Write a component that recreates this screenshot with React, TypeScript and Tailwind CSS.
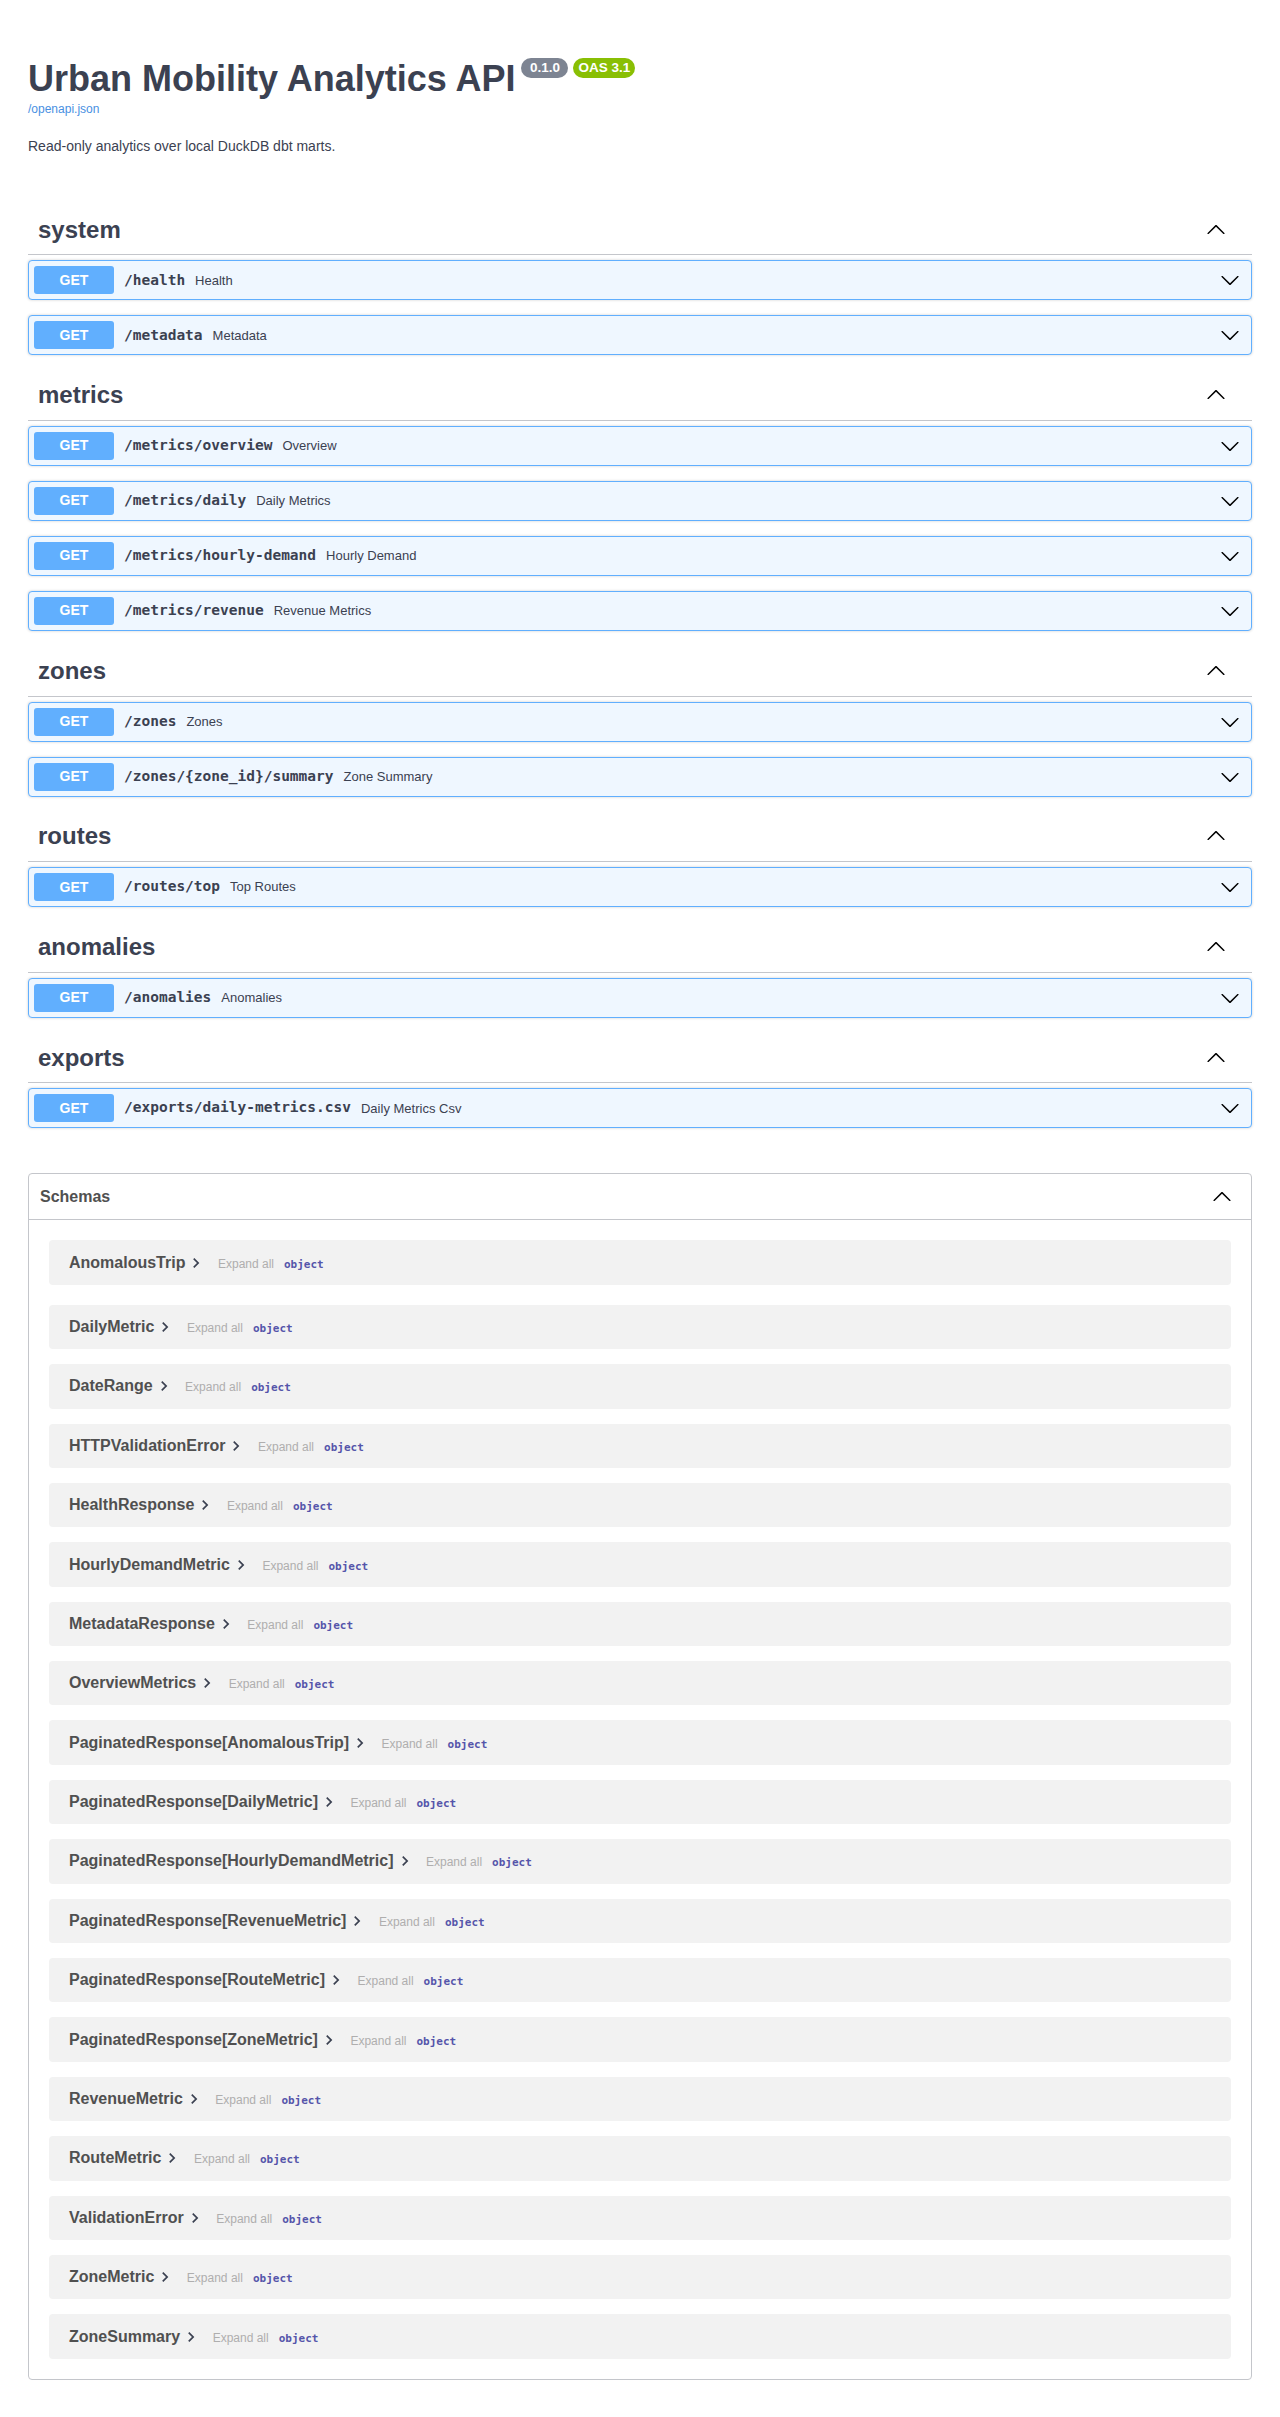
import React from "react";

interface Op {
  path: string;
  summary: string;
}

interface Tag {
  name: string;
  ops: Op[];
}

const tags: Tag[] = [
  { name: "system", ops: [{ path: "/health", summary: "Health" }, { path: "/metadata", summary: "Metadata" }] },
  {
    name: "metrics",
    ops: [
      { path: "/metrics/overview", summary: "Overview" },
      { path: "/metrics/daily", summary: "Daily Metrics" },
      { path: "/metrics/hourly-demand", summary: "Hourly Demand" },
      { path: "/metrics/revenue", summary: "Revenue Metrics" },
    ],
  },
  {
    name: "zones",
    ops: [
      { path: "/zones", summary: "Zones" },
      { path: "/zones/{zone_id}/summary", summary: "Zone Summary" },
    ],
  },
  { name: "routes", ops: [{ path: "/routes/top", summary: "Top Routes" }] },
  { name: "anomalies", ops: [{ path: "/anomalies", summary: "Anomalies" }] },
  { name: "exports", ops: [{ path: "/exports/daily-metrics.csv", summary: "Daily Metrics Csv" }] },
];

const schemas = [
  "AnomalousTrip",
  "DailyMetric",
  "DateRange",
  "HTTPValidationError",
  "HealthResponse",
  "HourlyDemandMetric",
  "MetadataResponse",
  "OverviewMetrics",
  "PaginatedResponse[AnomalousTrip]",
  "PaginatedResponse[DailyMetric]",
  "PaginatedResponse[HourlyDemandMetric]",
  "PaginatedResponse[RevenueMetric]",
  "PaginatedResponse[RouteMetric]",
  "PaginatedResponse[ZoneMetric]",
  "RevenueMetric",
  "RouteMetric",
  "ValidationError",
  "ZoneMetric",
  "ZoneSummary",
];

const ARROW_DOWN =
  "M17.418 6.109c.272-.268.709-.268.979 0s.271.701 0 .969l-7.908 7.83c-.27.268-.707.268-.979 0l-7.908-7.83c-.27-.268-.27-.701 0-.969.271-.268.709-.268.979 0L10 13.25l7.418-7.141z";

const ArrowDown = ({ up = false }: { up?: boolean }) => (
  <svg width="20" height="20" viewBox="0 0 20 20" className={up ? "rotate-180 shrink-0" : "shrink-0"}>
    <path d={ARROW_DOWN} fill="#000" />
  </svg>
);

const ModelToggle = () => (
  <svg width="20" height="20" viewBox="0 0 24 24" className="shrink-0">
    <path d="M10 6L8.59 7.41 13.17 12l-4.58 4.59L10 18l6-6z" fill="#3b4151" />
  </svg>
);

const mono = "font-['DejaVu_Sans_Mono',monospace]";

const App: React.FC = () => {
  return (
    <div className="min-h-screen bg-white px-[28px] pt-[58px] pb-[38px] font-['Liberation_Sans',Arial,sans-serif] text-[#3b4151]">
      {/* Info */}
      <div className="flex items-start">
        <h2 className="text-[36px] font-bold leading-[41.4px]">Urban Mobility Analytics API</h2>
        <span className="ml-[6px] flex h-[20px] w-[47px] items-center justify-center rounded-full bg-[#7d8492] text-[13.5px] font-bold text-white">
          0.1.0
        </span>
        <span className="ml-[5px] flex h-[20px] w-[62px] items-center justify-center rounded-full bg-[#89bf04] text-[13.5px] font-bold text-white">
          OAS 3.1
        </span>
      </div>
      <a className="mt-[4px] block text-[12px] leading-[13.8px] text-[#4990e2]">/openapi.json</a>
      <p className="mt-[20.6px] text-[14px] leading-[16px]">Read-only analytics over local DuckDB dbt marts.</p>

      {/* Tags */}
      <div className="mt-[51px]">
        {tags.map((tag) => (
          <div key={tag.name} className="flex flex-col">
            <div className="mb-[5px] flex h-[50.6px] items-center border-b border-[#c4c6cb] pl-[10px] pr-[26px]">
              <h3 className="text-[24px] font-bold">{tag.name}</h3>
              <div className="ml-auto">
                <ArrowDown up />
              </div>
            </div>
            {tag.ops.map((op) => (
              <div
                key={op.path}
                className="mb-[15px] flex h-[40px] items-center rounded-[4px] border border-[#61affe] bg-[#eff7ff] px-[5px] shadow-[0_0_3px_rgba(0,0,0,0.19)]"
              >
                <span className="flex h-[28px] w-[80px] items-center justify-center rounded-[3px] bg-[#61affe] text-[14px] font-bold text-white">
                  GET
                </span>
                <span className={`ml-[10px] text-[14.5px] font-bold ${mono}`}>{op.path}</span>
                <span className="ml-[10px] text-[13px]">{op.summary}</span>
                <div className="ml-auto mr-[6px]">
                  <ArrowDown />
                </div>
              </div>
            ))}
          </div>
        ))}
      </div>

      {/* Schemas */}
      <section className="mt-[30px] rounded-[4px] border border-[#c4c6cb] pb-[5px]">
        <div className="flex h-[46px] items-center border-b border-[#c4c6cb] pl-[11px] pr-[19px]">
          <h4 className="text-[16px] font-bold text-[#505050]">Schemas</h4>
          <div className="ml-auto">
            <ArrowDown up />
          </div>
        </div>
        {schemas.map((name, i) => (
          <div
            key={name}
            className={`mx-[20px] flex h-[44.4px] items-center rounded-[4px] bg-[#f2f2f2] pl-[20px] ${
              i === 0 ? "mt-[20px] mb-[20px]" : "mb-[15px]"
            }`}
          >
            <div className="flex items-baseline">
              <span className="text-[16px] font-bold text-[#505050]">{name}</span>
              <span className="ml-[1px] self-center">
                <ModelToggle />
              </span>
              <span className="ml-[11.5px] text-[12px] text-[#afaeae]">Expand all</span>
              <span className={`ml-[10px] text-[11px] font-bold text-[#5555aa] ${mono}`}>object</span>
            </div>
          </div>
        ))}
      </section>
    </div>
  );
};

export default App;
